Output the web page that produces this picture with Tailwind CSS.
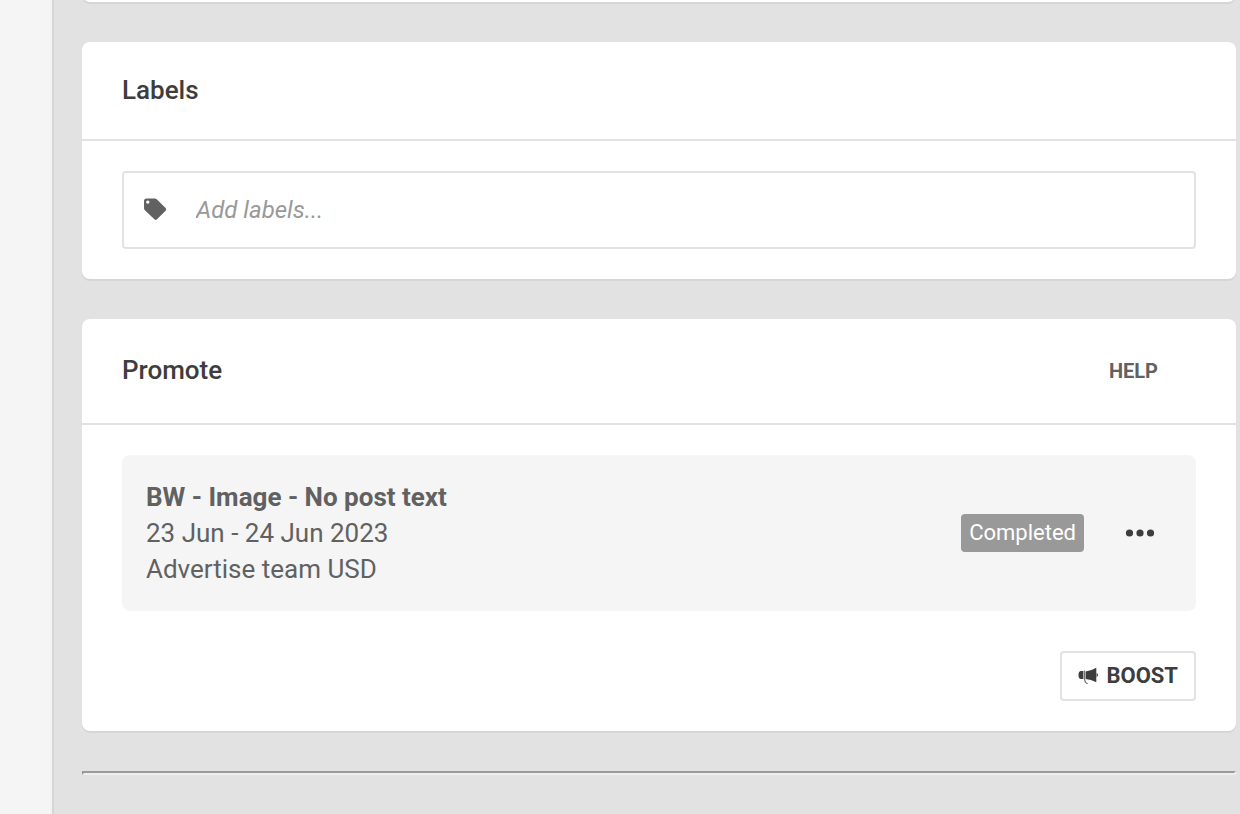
<!DOCTYPE html>
<html lang="en">
<head>
<meta charset="utf-8">
<meta name="viewport" content="width=device-width, initial-scale=1">
<title>Post details</title>
<script src="https://cdn.jsdelivr.net/npm/@tailwindcss/browser@4"></script>
</head>
<body class="flex min-h-screen bg-[#e2e2e2] font-[Roboto,sans-serif] text-[#616161]">
<aside class="w-[54px] shrink-0 border-r-2 border-[#d6d6d6] bg-[#f5f5f5]"></aside>
<main class="flex min-w-0 flex-1 flex-col gap-10 pr-1 pl-7">
  <div class="-mt-4 h-[18px] rounded-lg bg-white shadow-[0_2px_0_#d6d6d6]"></div>

  <section class="rounded-lg bg-white shadow-[0_2px_0_#d6d6d6]">
    <header class="border-b-2 border-[#e2e2e2] px-10 py-[30px]">
      <h2 class="text-[26px] leading-[37px] font-medium text-[#3d3d3d]"><label for="labels">Labels</label></h2>
    </header>
    <div class="px-10 py-[30px]">
      <div class="flex h-[78px] items-center gap-7 rounded border-2 border-[#e2e2e2] px-5">
        <svg class="h-6 w-6 shrink-0" viewBox="0 0 24 24" fill="#616161" aria-hidden="true">
          <path fill-rule="evenodd" d="M2.500.5h8.500q1 0 1.700.7l8.900 8.900q1.300 1.300 0 2.600l-8.600 8.600q-1.300 1.300-2.600 0L.7 11.900Q0 11.200 0 10.200V3Q0 .5 2.500.5zM3.800 2.400a1.700 1.700 0 1 0 0 3.400a1.700 1.700 0 1 0 0-3.400z"/>
        </svg>
        <input id="labels" type="text" placeholder="Add labels..." class="min-w-0 flex-1 text-2xl italic outline-none placeholder:text-[#999]">
      </div>
    </div>
  </section>

  <section class="rounded-lg bg-white shadow-[0_2px_0_#d6d6d6]">
    <header class="flex items-center justify-between border-b-2 border-[#e2e2e2] px-10 py-8">
      <h2 class="pb-0.5 text-[26px] leading-[38px] font-medium text-[#3d3d3d]">Promote</h2>
      <button type="button" class="px-[38px] text-xl font-bold">HELP</button>
    </header>
    <div class="px-10 py-[30px]">
      <div class="flex items-center rounded-lg bg-[#f5f5f5] p-6">
        <div class="flex-1 text-[26px] leading-9">
          <h3 class="font-bold">BW - Image - No post text</h3>
          <p>23 Jun - 24 Jun 2023</p>
          <p>Advertise team USD</p>
        </div>
        <span class="rounded bg-[#999] px-2 text-[22px] leading-[38px] text-white">Completed</span>
        <button type="button" aria-label="More options" class="mr-4 ml-10">
          <svg class="h-8 w-8" viewBox="0 0 32 32" fill="#3d3d3d"><circle cx="5.500" cy="16" r="3.600"/><circle cx="16" cy="16" r="3.600"/><circle cx="26.500" cy="16" r="3.600"/></svg>
        </button>
      </div>
      <div class="mt-10 flex justify-end">
        <button type="button" class="flex h-[50px] items-center gap-2 rounded border-2 border-[#e2e2e2] px-4 pb-0.5 text-[22px] font-bold text-[#3d3d3d]">
          <svg class="h-5 w-5" viewBox="0 0 20 20" fill="#3d3d3d" aria-hidden="true">
            <path d="M5.400 6v8H3Q.5 14 .5 10T3 6z"/>
            <path d="M7.600 6.500Q13 6 18.300 2.800v14.400Q13 14.500 7.600 14z"/>
            <path d="M18.600 8q1.400.3 1.400 2t-1.400 2z"/>
            <path d="M6.500 5.500v8.500q.3 3.800 3.200 4.800" fill="none" stroke="#777" stroke-width="1.200"/>
          </svg>
          BOOST
        </button>
      </div>
    </div>
  </section>

  <hr class="border-2 border-t-[#9a9a9a] border-r-[#eee] border-b-[#eee] border-l-[#9a9a9a]">
</main>
</body>
</html>
